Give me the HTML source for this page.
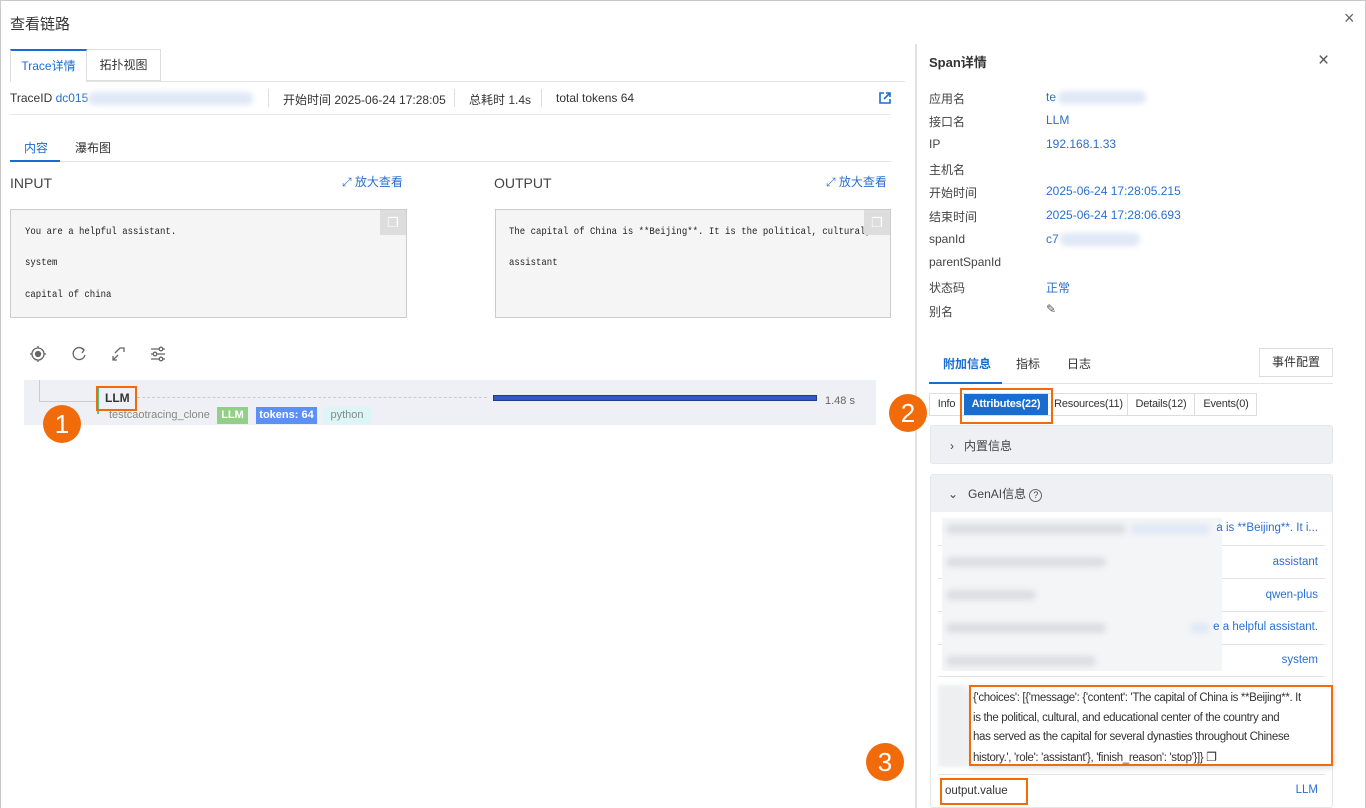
<!DOCTYPE html>
<html><head><meta charset="utf-8"><style>
*{box-sizing:border-box;margin:0;padding:0}
body{width:1366px;height:808px;background:#fff;font-family:"Liberation Sans","Noto Sans CJK SC",sans-serif;font-size:12px;color:#333;position:relative;overflow:hidden}
.a{position:absolute;white-space:nowrap}
.blue{color:#2a6fd0}
.line{position:absolute;height:1px;background:#e3e3e3}
.mono{font-family:"Liberation Mono","Noto Sans CJK SC",monospace;font-size:9px;color:#222;transform:scaleY(1.15);transform-origin:left top}
.blur{position:absolute;background:#dfe8f6;filter:blur(3px);border-radius:6px}
.tag{position:absolute;height:17px;line-height:17px;font-size:11px;font-weight:bold;text-align:center}
.circ{position:absolute;width:38px;height:38px;border-radius:50%;background:#f26b0b;color:#fff;font-size:26px;text-align:center;line-height:38px}
.orange{position:absolute;border:2px solid #f26b0b}
.lab{position:absolute;left:929px;color:#444}
.val{position:absolute;left:1046px;color:#2a6fd0}
.rv{position:absolute;right:48px;color:#2a6fd0;white-space:nowrap;font-size:11.5px}
.st{position:absolute;top:394px;height:21px;text-align:center;line-height:21px;font-size:11px;letter-spacing:-0.2px}
</style></head><body>
<div style="position:absolute;left:0;top:0;width:1366px;height:808px;border:1px solid #c9c9c9;border-bottom:none"></div>
<div class="a" style="left:10px;top:13px;font-size:15px;color:#333">查看链路</div>
<div class="a" style="left:1344px;top:8px;font-size:18px;color:#666">×</div>

<div class="a" style="left:10px;top:49px;width:77px;height:33px;border:1px solid #ddd;border-top:2px solid #1a6dd0;border-bottom:none;background:#fff;color:#1a6dd0;text-align:center;line-height:31px;font-size:12px">Trace详情</div>
<div class="a" style="left:87px;top:49px;width:74px;height:32px;border:1px solid #ddd;border-left:none;text-align:center;line-height:31px;font-size:12px">拓扑视图</div>
<div class="line" style="left:87px;top:81px;width:818px"></div>

<div class="a" style="left:10px;top:91px">TraceID <span class="blue">dc015</span></div>
<div class="blur" style="left:88px;top:92px;width:165px;height:13px"></div>
<div style="position:absolute;left:268px;top:89px;width:1px;height:18px;background:#ddd"></div>
<div class="a" style="left:283px;top:91px">开始时间 2025-06-24 17:28:05</div>
<div style="position:absolute;left:454px;top:89px;width:1px;height:18px;background:#ddd"></div>
<div class="a" style="left:469px;top:91px">总耗时 1.4s</div>
<div style="position:absolute;left:541px;top:89px;width:1px;height:18px;background:#ddd"></div>
<div class="a" style="left:556px;top:91px">total tokens 64</div>
<svg class="a" style="left:879px;top:92px" width="12" height="12" viewBox="0 0 12 12"><path d="M5 1H1v10h10V7" fill="none" stroke="#1a6dd0" stroke-width="1.6"/><path d="M7 1h4v4M11 1L5 7" fill="none" stroke="#1a6dd0" stroke-width="1.6"/></svg>
<div class="line" style="left:10px;top:114px;width:881px;background:#e8e8e8"></div>

<div class="a" style="left:24px;top:139px;color:#1a6dd0">内容</div>
<div class="a" style="left:75px;top:139px">瀑布图</div>
<div class="line" style="left:10px;top:161px;width:881px"></div>
<div style="position:absolute;left:10px;top:160px;width:50px;height:2px;background:#1a6dd0"></div>

<div class="a" style="left:10px;top:175px;font-size:14px;color:#444">INPUT</div>
<div class="a blue" style="left:342px;top:173px">⤢ 放大查看</div>
<div class="a" style="left:494px;top:175px;font-size:14px;color:#444">OUTPUT</div>
<div class="a blue" style="left:826px;top:173px">⤢ 放大查看</div>

<div class="a" style="left:10px;top:209px;width:397px;height:109px;background:#f5f5f5;border:1px solid #ccc"></div>
<div class="a" style="left:380px;top:210px;width:26px;height:25px;background:#ddd;color:#fff;text-align:center;line-height:25px;font-size:13px">❐</div>
<div class="a mono" style="left:25px;top:226px">You are a helpful assistant.</div>
<div class="a mono" style="left:25px;top:257px">system</div>
<div class="a mono" style="left:25px;top:289px">capital of china</div>

<div class="a" style="left:495px;top:209px;width:396px;height:109px;background:#f5f5f5;border:1px solid #ccc;overflow:hidden"><div class="a mono" style="left:13px;top:16px">The capital of China is **Beijing**. It is the political, cultural, an</div><div class="a mono" style="left:13px;top:47px">assistant</div></div>
<div class="a" style="left:864px;top:210px;width:26px;height:25px;background:#ddd;color:#fff;text-align:center;line-height:25px;font-size:13px">❐</div>

<svg class="a" style="left:29px;top:345px" width="140" height="18" viewBox="0 0 140 18">
<g fill="none" stroke="#666" stroke-width="1.3">
<circle cx="9" cy="9" r="6"/><circle cx="9" cy="9" r="2.5" fill="#666"/><path d="M9 1v2M9 15v2M1 9h2M15 9h2"/>
<path d="M55 5A6 6 0 1 0 56 10"/><path d="M52 3l3 2-2 3"/>
<path d="M84 15l5-5M91 3l-5 5M84 11v4h4M95 7V3h-4"/>
<path d="M122 4h14M122 9h14M122 14h14"/><circle cx="132" cy="4" r="1.8" fill="#fff"/><circle cx="126" cy="9" r="1.8" fill="#fff"/><circle cx="132" cy="14" r="1.8" fill="#fff"/>
</g></svg>

<div class="a" style="left:24px;top:380px;width:852px;height:45px;background:#eef0f5"></div>
<div class="a" style="left:39px;top:380px;width:58px;height:22px;border-left:1px solid #ccc;border-bottom:1px solid #ccc"></div>
<div class="a" style="left:137px;top:397px;width:350px;border-top:1px dashed #ccc"></div>
<div class="a" style="left:97px;top:387px;width:2px;height:27px;background:#4cc58f"></div>
<div class="orange" style="left:96px;top:386px;width:41px;height:25px"></div>
<div class="a" style="left:105px;top:391px;font-weight:bold;color:#333">LLM</div>
<div class="a" style="left:109px;top:409px;color:#888;font-size:11px">testcaotracing_clone</div>
<div class="tag" style="left:217px;top:407px;width:31px;background:#92cf87;color:#fff">LLM</div>
<div class="tag" style="left:256px;top:407px;width:61px;background:#5b8ff9;color:#fff">tokens: 64</div>
<div class="tag" style="left:323px;top:407px;width:48px;background:#dcf6f8;color:#888;font-weight:normal">python</div>
<div class="a" style="left:493px;top:395px;width:324px;height:6px;background:#3257c6;border:1px solid #1d3b8f"></div>
<div class="a" style="left:825px;top:395px;color:#666;font-size:11px">1.48 s</div>
<div class="circ" style="left:43px;top:405px">1</div>

<div style="position:absolute;left:915px;top:44px;width:2px;height:764px;background:#e2e2e2"></div>
<div class="a" style="left:929px;top:52px;font-weight:bold;font-size:13px">Span详情</div>
<div class="a" style="left:1318px;top:50px;font-size:19px;color:#555">×</div>
<div class="lab" style="top:90px">应用名</div><div class="val" style="top:90px">te</div><div class="blur" style="left:1058px;top:91px;width:88px;height:13px"></div>
<div class="lab" style="top:113px">接口名</div><div class="val" style="top:113px">LLM</div>
<div class="lab" style="top:137px">IP</div><div class="val" style="top:137px">192.168.1.33</div>
<div class="lab" style="top:161px">主机名</div>
<div class="lab" style="top:184px">开始时间</div><div class="val" style="top:184px">2025-06-24 17:28:05.215</div>
<div class="lab" style="top:208px">结束时间</div><div class="val" style="top:208px">2025-06-24 17:28:06.693</div>
<div class="lab" style="top:232px">spanId</div><div class="val" style="top:232px">c7</div><div class="blur" style="left:1060px;top:233px;width:80px;height:13px"></div>
<div class="lab" style="top:255px">parentSpanId</div>
<div class="lab" style="top:279px">状态码</div><div class="val" style="top:279px">正常</div>
<div class="lab" style="top:303px">别名</div><div class="a" style="left:1046px;top:302px;color:#555">✎</div>

<div class="a" style="left:943px;top:355px;color:#1a6dd0;font-weight:bold">附加信息</div>
<div class="a" style="left:1016px;top:355px">指标</div>
<div class="a" style="left:1067px;top:355px">日志</div>
<div class="a" style="left:1259px;top:348px;width:74px;height:29px;border:1px solid #ddd;text-align:center;line-height:27px">事件配置</div>
<div class="line" style="left:929px;top:383px;width:404px"></div>
<div class="a" style="left:929px;top:382px;width:73px;height:2px;background:#1a6dd0"></div>

<div class="a" style="left:929px;top:393px;width:328px;height:23px;border:1px solid #ddd;background:#fff"></div>
<div class="st" style="left:930px;width:33px">Info</div>
<div class="st" style="left:964px;width:84px;background:#1a6dd0;color:#fff;font-weight:bold">Attributes(22)</div>
<div class="st" style="left:1050px;width:78px;border-right:1px solid #ddd">Resources(11)</div>
<div class="st" style="left:1128px;width:67px;border-right:1px solid #ddd">Details(12)</div>
<div class="st" style="left:1195px;width:62px">Events(0)</div>
<div class="orange" style="left:960px;top:388px;width:93px;height:36px"></div>
<div class="circ" style="left:889px;top:394px">2</div>

<div class="a" style="left:930px;top:425px;width:403px;height:39px;background:#eef0f4;border:1px solid #e4e6ea;border-radius:3px"></div>
<div class="a" style="left:950px;top:437px;color:#444">›&nbsp;&nbsp; 内置信息</div>
<div class="a" style="left:930px;top:474px;width:403px;height:334px;background:#fff;border:1px solid #e4e6ea;border-radius:3px"></div>
<div class="a" style="left:931px;top:475px;width:401px;height:37px;background:#eef0f4"></div>
<div class="a" style="left:948px;top:485px;color:#444">⌄&nbsp;&nbsp; GenAI信息 <span style="display:inline-block;width:13px;height:13px;border:1px solid #666;border-radius:50%;font-size:9px;text-align:center;line-height:11px">?</span></div>

<div class="line" style="left:938px;top:545px;width:387px"></div>
<div class="line" style="left:938px;top:578px;width:387px"></div>
<div class="line" style="left:938px;top:611px;width:387px"></div>
<div class="line" style="left:938px;top:644px;width:387px"></div>
<div class="line" style="left:938px;top:676px;width:387px"></div>
<div class="line" style="left:938px;top:774px;width:387px"></div>
<div class="a" style="left:942px;top:518px;width:280px;height:153px;background:#f4f5f7"></div>
<div class="blur" style="left:946px;top:524px;width:180px;height:10px;background:#dcdde0"></div>
<div class="blur" style="left:1130px;top:524px;width:80px;height:10px"></div>
<div class="blur" style="left:946px;top:557px;width:160px;height:10px;background:#dcdde0"></div>
<div class="blur" style="left:946px;top:590px;width:90px;height:10px;background:#dcdde0"></div>
<div class="blur" style="left:946px;top:623px;width:160px;height:10px;background:#dcdde0"></div>
<div class="blur" style="left:1190px;top:623px;width:20px;height:10px"></div>
<div class="blur" style="left:946px;top:656px;width:150px;height:10px;background:#dcdde0"></div>
<div class="rv" style="top:522px">a is **Beijing**. It i...</div>
<div class="rv" style="top:556px">assistant</div>
<div class="rv" style="top:589px">qwen-plus</div>
<div class="rv" style="top:621px">e a helpful assistant.</div>
<div class="rv" style="top:654px">system</div>
<div class="a" style="left:938px;top:685px;width:28px;height:82px;background:#eeeff1;filter:blur(2px)"></div>

<div class="a" style="left:969px;top:685px;width:364px;height:81px;background:#fff;border:2px solid #f26b0b;box-shadow:0 2px 6px rgba(0,0,0,.15)"></div>
<div class="a" style="left:973px;top:689px;line-height:19.5px;font-size:11.5px;letter-spacing:-0.35px;color:#333">{'choices': [{'message': {'content': 'The capital of China is **Beijing**. It<br>is the political, cultural, and educational center of the country and<br>has served as the capital for several dynasties throughout Chinese<br>history.', 'role': 'assistant'}, 'finish_reason': 'stop'}]} <span style="font-size:12px">❐</span></div>
<div class="circ" style="left:866px;top:743px">3</div>

<div class="orange" style="left:940px;top:778px;width:88px;height:27px"></div>
<div class="a" style="left:945px;top:785px;font-size:11.5px">output.value</div>
<div class="rv" style="top:784px">LLM</div>
</body></html>
